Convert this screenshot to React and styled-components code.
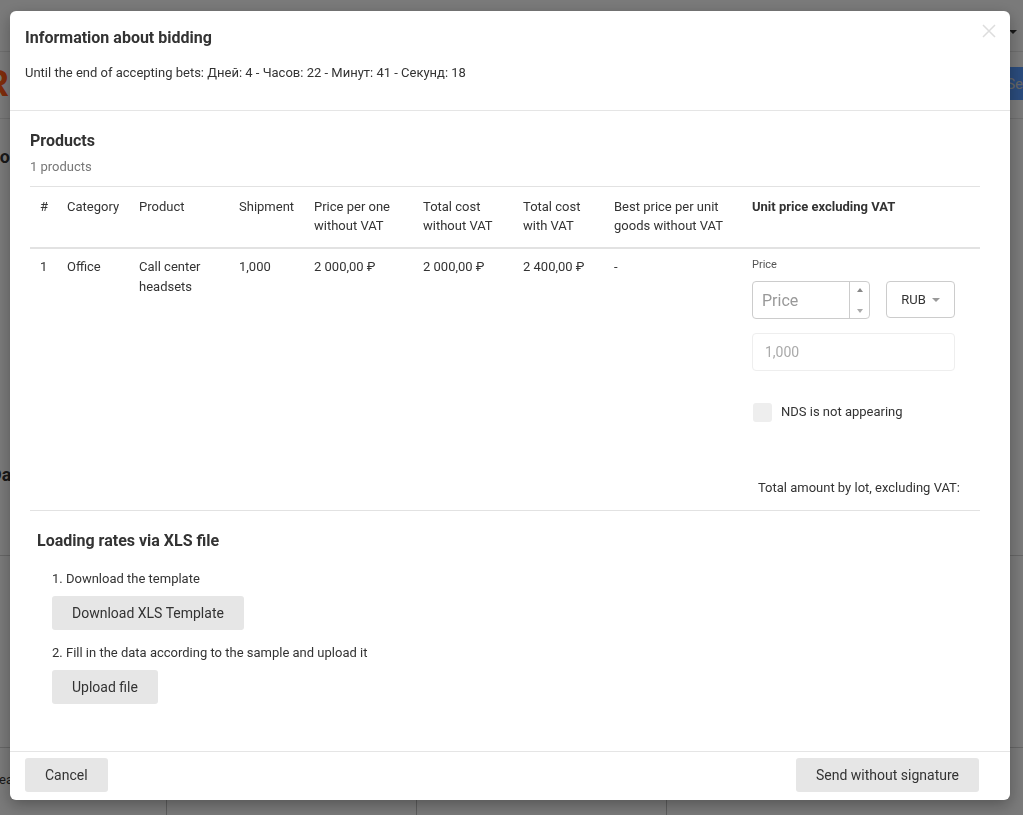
import React from "react";
import styled, { createGlobalStyle } from "styled-components";

const Global = createGlobalStyle`
  html, body { margin: 0; padding: 0; }
  body {
    font-family: Roboto, "Liberation Sans", Arial, sans-serif;
    color: #333;
    background: #f5f5f5;
    width: 1023px;
    height: 815px;
    overflow: hidden;
  }
  * { box-sizing: border-box; }
`;

/* ---------- background page (dimmed behind the modal) ---------- */
const Page = styled.div`
  width: 1023px;
  height: 815px;
  background: #f5f5f5;
  display: flex;
  flex-direction: column;
`;
const TopBar = styled.div`
  height: 52px;
  flex: none;
  border-bottom: 1px solid #ddd;
  display: flex;
  justify-content: flex-end;
  align-items: flex-start;
  padding: 30px 6px 0 0;
`;
const Caret = styled.span`
  width: 0;
  height: 0;
  border-left: 4px solid transparent;
  border-right: 4px solid transparent;
  border-top: 4px solid #333;
`;
const BrandBar = styled.div`
  height: 67px;
  flex: none;
  border-bottom: 1px solid #ddd;
  display: flex;
  justify-content: space-between;
  align-items: center;
`;
const Logo = styled.span`
  font-family: "Liberation Sans", Arial, sans-serif;
  font-weight: 700;
  font-size: 36px;
  color: #ff5a16;
  margin-left: -17px;
  margin-top: -2px;
`;
const SearchBtn = styled.span`
  background: #5597f8;
  color: #ccc;
  height: 33px;
  padding: 0 20px 0 4px;
  margin-right: -20px;
  margin-top: -3px;
  display: flex;
  align-items: center;
  font-size: 15px;
`;
const PageBlock = styled.div`
  height: ${(p) => p.$h}px;
  flex: none;
  border-bottom: ${(p) => (p.$line ? "1px solid #ccc" : "none")};
  display: flex;
  align-items: flex-start;
  font-weight: ${(p) => p.$weight || 700};
  font-size: ${(p) => p.$size || 18}px;
  line-height: 22px;
  padding-top: ${(p) => p.$pt || 0}px;
  margin-left: ${(p) => p.$ml || -10}px;
`;
const PageCols = styled.div`
  flex: 1;
  display: grid;
  grid-template-columns: 167px 250px 250px 1fr;
`;
const PageCol = styled.div`
  border-right: 1px solid #bbb;
  &:last-child { border-right: none; }
`;

/* ---------- overlay + modal ---------- */
const Overlay = styled.div`
  position: fixed;
  inset: 0;
  background: rgba(0, 0, 0, 0.5);
  padding: 11px 13px 15px 10px;
`;
const Modal = styled.div`
  width: 1000px;
  height: 789px;
  background: #fff;
  border-radius: 6px;
  display: flex;
  flex-direction: column;
  position: relative;
  box-shadow: 0 5px 15px rgba(0, 0, 0, 0.3);
`;
const Header = styled.div`
  padding: 17px 15px 28px;
  border-bottom: 1px solid #e5e5e5;
`;
const Title = styled.h4`
  margin: 0;
  font-size: 16px;
  line-height: 20px;
  font-weight: 700;
  color: #333;
`;
const Subtitle = styled.div`
  margin-top: 16px;
  font-size: 13px;
  line-height: 18px;
  color: #333;
`;
const Close = styled.button`
  position: absolute;
  top: 11px;
  right: 11px;
  width: 20px;
  height: 20px;
  border: none;
  background: none;
  padding: 0;
  cursor: pointer;
`;
const Body = styled.div`
  flex: 1;
  padding: 20px 30px 0 20px;
`;
const SectionTitle = styled.h3`
  margin: 0;
  font-size: 16px;
  line-height: 20px;
  font-weight: 700;
  color: #333;
`;
const Muted = styled.div`
  margin-top: 7px;
  font-size: 13px;
  line-height: 18px;
  color: #777;
`;
const Table = styled.table`
  margin-top: 10px;
  width: 950px;
  border-collapse: collapse;
  table-layout: fixed;
  font-size: 13px;
  line-height: 19px;
  border-top: 1px solid #e2e2e2;
`;
const Th = styled.th`
  text-align: left;
  font-weight: ${(p) => (p.$bold ? 700 : 400)};
  vertical-align: top;
  padding: 10px 10px 12px;
  border-bottom: 2px solid #e2e2e2;
  color: #333;
`;
const Td = styled.td`
  vertical-align: top;
  padding: 8px 10px 0;
  line-height: 20px;
  color: #333;
`;
const TotalCell = styled.td`
  text-align: right;
  padding: 56px 20px 12px 0;
  border-bottom: 1px solid #e2e2e2;
  line-height: 20px;
`;
const FieldLabel = styled.div`
  font-size: 11px;
  line-height: 14px;
  color: #555;
  margin-top: 1px;
`;
const InputRow = styled.div`
  display: flex;
  gap: 16px;
  margin-top: 9px;
`;
const NumberBox = styled.div`
  width: 118px;
  height: 38px;
  border: 1px solid #ccc;
  border-radius: 4px;
  display: flex;
`;
const NumberInput = styled.input`
  width: 96px;
  border: none;
  outline: none;
  background: transparent;
  padding: 0 9px;
  font-family: inherit;
  font-size: 16px;
  color: #333;
  &::placeholder { color: #999; }
`;
const Spinner = styled.div`
  flex: 1;
  border-left: 1px solid #ccc;
  display: flex;
  flex-direction: column;
  justify-content: space-between;
  align-items: center;
  padding: 6px 0 5px;
`;
const Tri = styled.span`
  width: 0;
  height: 0;
  border-left: 3px solid transparent;
  border-right: 3px solid transparent;
  ${(p) =>
    p.$up ? "border-bottom: 4px solid #888;" : "border-top: 4px solid #aaa;"}
`;
const Select = styled.div`
  width: 69px;
  height: 37px;
  border: 1px solid #ccc;
  border-radius: 4px;
  display: flex;
  align-items: center;
  justify-content: center;
  gap: 6px;
  font-size: 13px;
  color: #333;
`;
const SelCaret = styled.span`
  width: 0;
  height: 0;
  border-left: 4px solid transparent;
  border-right: 4px solid transparent;
  border-top: 4px solid #999;
`;
const Disabled = styled.div`
  margin-top: 14px;
  width: 203px;
  height: 38px;
  border: 1px solid #eee;
  border-radius: 4px;
  display: flex;
  align-items: center;
  padding: 0 12px;
  font-size: 14px;
  color: #aaa;
`;
const CheckRow = styled.label`
  display: flex;
  align-items: center;
  gap: 9px;
  margin-top: 31px;
  margin-left: 1px;
  font-size: 13px;
  color: #333;
`;
const CheckBox = styled.span`
  width: 19px;
  height: 19px;
  border-radius: 3px;
  background: #eee;
`;
const XlsSection = styled.div`
  padding: 20px 0 0 7px;
`;
const Step = styled.div`
  font-size: 13px;
  line-height: 18px;
  color: #333;
  margin: ${(p) => p.$mt}px 0 8px 15px;
`;
const GrayButton = styled.button`
  background: #e6e6e6;
  border: none;
  border-radius: 3px;
  height: 34px;
  padding: 0 ${(p) => p.$px || 20}px;
  font-family: inherit;
  font-size: 14px;
  color: #333;
  cursor: pointer;
  margin-left: ${(p) => p.$ml || 0}px;
`;
const Footer = styled.div`
  border-top: 1px solid #e5e5e5;
  padding: 6px 31px 8px 15px;
  display: flex;
  justify-content: space-between;
`;

export default function App() {
  return (
    <>
      <Global />
      <Page>
        <TopBar>
          <Caret />
        </TopBar>
        <BrandBar>
          <Logo>R</Logo>
          <SearchBtn>Se</SearchBtn>
        </BrandBar>
        <PageBlock $h={81} $pt={27}>
          Lo
        </PageBlock>
        <PageBlock $h={356} $pt={264} $line>
          Da
        </PageBlock>
        <PageBlock $h={192} $line />
        <PageBlock $h={52} $pt={21} $weight={400} $size={13} $ml={-8}>
          Lead
        </PageBlock>
        <PageCols>
          <PageCol />
          <PageCol />
          <PageCol />
          <PageCol />
        </PageCols>
      </Page>
      <Overlay>
        <Modal>
          <Close aria-label="Close">
            <svg width="14" height="14" viewBox="0 0 14 14">
              <path d="M1 1L13 13M13 1L1 13" stroke="#ddd" strokeWidth="1.5" />
            </svg>
          </Close>
          <Header>
            <Title>Information about bidding</Title>
            <Subtitle>
              Until the end of accepting bets: Дней: 4 - Часов: 22 - Минут: 41 -
              Секунд: 18
            </Subtitle>
          </Header>
          <Body>
            <SectionTitle>Products</SectionTitle>
            <Muted>1 products</Muted>
            <Table>
              <colgroup>
                <col style={{ width: 27 }} />
                <col style={{ width: 72 }} />
                <col style={{ width: 100 }} />
                <col style={{ width: 75 }} />
                <col style={{ width: 109 }} />
                <col style={{ width: 100 }} />
                <col style={{ width: 91 }} />
                <col style={{ width: 138 }} />
                <col style={{ width: 238 }} />
              </colgroup>
              <thead>
                <tr>
                  <Th>#</Th>
                  <Th>Category</Th>
                  <Th>Product</Th>
                  <Th>Shipment</Th>
                  <Th>
                    Price per one
                    <br />
                    without VAT
                  </Th>
                  <Th>
                    Total cost
                    <br />
                    without VAT
                  </Th>
                  <Th>
                    Total cost
                    <br />
                    with VAT
                  </Th>
                  <Th>
                    Best price per unit
                    <br />
                    goods without VAT
                  </Th>
                  <Th $bold>Unit price excluding VAT</Th>
                </tr>
              </thead>
              <tbody>
                <tr>
                  <Td>1</Td>
                  <Td>Office</Td>
                  <Td>
                    Call center
                    <br />
                    headsets
                  </Td>
                  <Td>1,000</Td>
                  <Td>2 000,00 ₽</Td>
                  <Td>2 000,00 ₽</Td>
                  <Td>2 400,00 ₽</Td>
                  <Td>-</Td>
                  <Td>
                    <FieldLabel>Price</FieldLabel>
                    <InputRow>
                      <NumberBox>
                        <NumberInput placeholder="Price" />
                        <Spinner>
                          <Tri $up />
                          <Tri />
                        </Spinner>
                      </NumberBox>
                      <Select>
                        RUB <SelCaret />
                      </Select>
                    </InputRow>
                    <Disabled>1,000</Disabled>
                    <CheckRow>
                      <CheckBox />
                      NDS is not appearing
                    </CheckRow>
                  </Td>
                </tr>
                <tr>
                  <TotalCell colSpan={9}>
                    Total amount by lot, excluding VAT:
                  </TotalCell>
                </tr>
              </tbody>
            </Table>
            <XlsSection>
              <SectionTitle>Loading rates via XLS file</SectionTitle>
              <Step $mt={19}>1. Download the template</Step>
              <GrayButton $ml={15}>Download XLS Template</GrayButton>
              <Step $mt={14}>2. Fill in the data according to the sample and upload it</Step>
              <GrayButton $ml={15}>Upload file</GrayButton>
            </XlsSection>
          </Body>
          <Footer>
            <GrayButton $px={20}>Cancel</GrayButton>
            <GrayButton $px={20}>Send without signature</GrayButton>
          </Footer>
        </Modal>
      </Overlay>
    </>
  );
}
